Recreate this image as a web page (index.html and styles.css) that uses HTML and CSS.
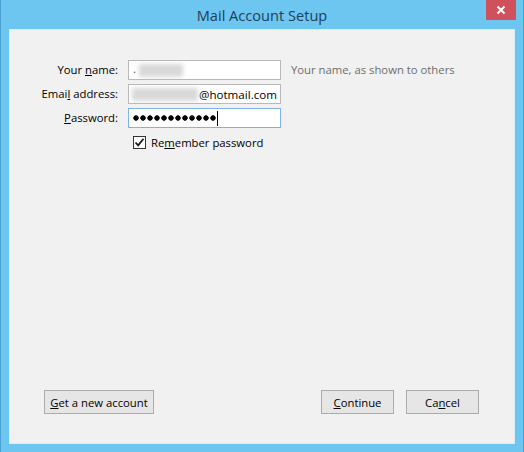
FILE: index.html
```html
<!DOCTYPE html>
<html>
<head>
<meta charset="utf-8">
<link rel="stylesheet" href="styles.css">
</head>
<body>
<div class="window">
  <div class="titlebar">
    <div class="title">Mail Account Setup</div>
    <div class="close">
      <svg width="10" height="10" viewBox="0 0 10 10"><path d="M1.5 1.5 L8.5 8.5 M8.5 1.5 L1.5 8.5" stroke="#fff" stroke-width="2" fill="none"/></svg>
    </div>
  </div>
  <div class="client">
    <div class="form">
      <label class="lbl">Your <u>n</u>ame:</label>
      <div class="field"><span class="dot">.</span><span class="blur b1"></span></div>
      <div class="hint">Your name, as shown to others</div>

      <label class="lbl">Emai<u>l</u> address:</label>
      <div class="field"><span class="blur b2"></span><span class="txt">@hotmail.com</span></div>
      <div></div>

      <label class="lbl"><u>P</u>assword:</label>
      <div class="field focus"><span class="pw" aria-label="password"></span><span class="caret"></span></div>
      <div></div>

      <div></div>
      <div class="check">
        <span class="box"><svg width="11" height="11" viewBox="0 0 11 11"><path d="M1.5 5.5 L4.2 8.3 L9.5 1.8" stroke="#1a1a1a" stroke-width="1.8" fill="none"/></svg></span>
        <span>Re<u>m</u>ember password</span>
      </div>
      <div></div>
    </div>
    <div class="footer">
      <button class="btn wide"><u>G</u>et a new account</button>
      <div class="spacer"></div>
      <button class="btn"><u>C</u>ontinue</button>
      <button class="btn">Ca<u>n</u>cel</button>
    </div>
  </div>
</div>
</body>
</html>
```
FILE: styles.css
```css
html, body {
  margin: 0;
  padding: 0;
  background: #6cc6f0;
}
.window {
  width: 524px;
  height: 452px;
  box-sizing: border-box;
  background: #6cc6f0;
  border-left: 1px solid #4a9fd0;
  border-right: 1px solid #4a9fd0;
  display: flex;
  flex-direction: column;
  font-family: "Open Sans", "Noto Sans", sans-serif;
  font-size: 11.3px;
  color: #000;
}
.titlebar {
  height: 29px;
  position: relative;
  display: flex;
  justify-content: center;
}
.title {
  font-size: 14.6px;
  color: #20405a;
  line-height: 30px;
}
.close {
  position: absolute;
  top: 0;
  right: 7px;
  width: 30px;
  height: 20px;
  background: #d0505b;
  display: flex;
  align-items: center;
  justify-content: center;
}
.client {
  margin: 0 8px 0 8px;
  height: 413px;
  background: #f1f1f1;
  border: 1px solid #d6ecf8;
  display: flex;
  flex-direction: column;
}
.form {
  display: grid;
  grid-template-columns: 108px 153px auto;
  grid-auto-rows: 20px;
  column-gap: 10px;
  row-gap: 4px;
  padding-top: 30px;
  flex: 1;
  align-content: start;
}
.lbl {
  text-align: right;
  line-height: 20px;
  white-space: nowrap;
}
.field {
  box-sizing: border-box;
  height: 20px;
  background: #fff;
  border: 1px solid #b9b9b9;
  display: flex;
  align-items: center;
  padding: 0 3px;
  overflow: hidden;
  white-space: nowrap;
}
.field.focus {
  border-color: #7eb4ea;
}
.dot {
  color: #555;
  margin-left: 1px;
  margin-top: -4px;
}
.blur {
  display: inline-block;
  height: 13px;
  background: #d9d9d9;
  filter: blur(2px);
}
.b1 {
  width: 44px;
  margin-left: 3px;
}
.b2 {
  width: 66px;
}
.txt {
  margin-left: 1px;
  font-size: 11.6px;
}
.pw {
  display: inline-block;
  width: 84px;
  height: 6px;
  margin-left: 1px;
  background-image: radial-gradient(circle at 3px 3px, #000 2.4px, transparent 3px);
  background-size: 7px 6px;
  background-repeat: repeat-x;
}
.caret {
  display: inline-block;
  width: 1px;
  height: 15px;
  background: #000;
}
.hint {
  color: #6d6d6d;
  line-height: 20px;
  white-space: nowrap;
}
.check {
  display: flex;
  align-items: center;
  gap: 5px;
  margin-left: 5px;
  white-space: nowrap;
}
.box {
  box-sizing: border-box;
  width: 13px;
  height: 13px;
  border: 1px solid #333;
  background: #fff;
  display: flex;
  align-items: center;
  justify-content: center;
}
.footer {
  display: flex;
  padding: 0 35px 29px 34px;
  gap: 12px;
}
.spacer {
  flex: 1;
}
.btn {
  box-sizing: border-box;
  height: 24px;
  width: 73px;
  background: #e6e6e6;
  border: 1px solid #acacac;
  font-family: "Open Sans", "Noto Sans", sans-serif;
  font-size: 11.3px;
  color: #000;
  padding: 0;
}
.btn.wide {
  width: 110px;
}
```
